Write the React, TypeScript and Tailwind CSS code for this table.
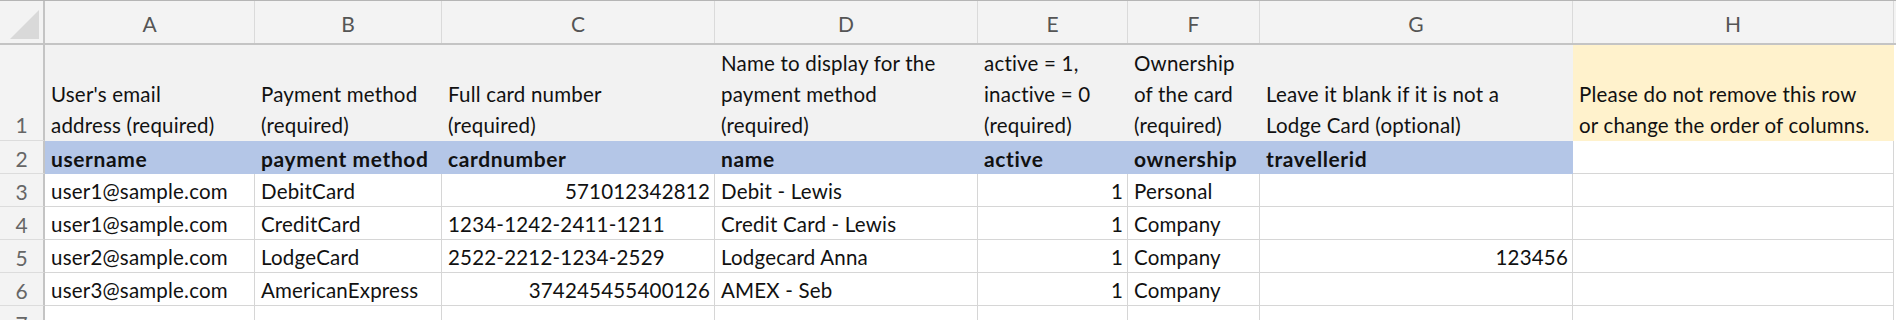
import React from "react";

type Fill = "none" | "gray" | "blue" | "yellow";

const colW = [
  "w-[210px]",
  "w-[187px]",
  "w-[273px]",
  "w-[263px]",
  "w-[150px]",
  "w-[132px]",
  "w-[313px]",
  "w-[321px]",
];

const letters = ["A", "B", "C", "D", "E", "F", "G", "H"];

const fillCls: Record<Fill, string> = {
  none: "bg-white border-[#d6d6d6]",
  gray: "bg-[#f2f2f2] border-[#f2f2f2]",
  blue: "bg-[#b4c6e7] border-[#b4c6e7]",
  yellow: "bg-[#fff2cc] border-[#fff2cc]",
};

function Cell({
  i,
  fill = "none",
  right = false,
  bold = false,
  lines = [],
  tall = false,
}: {
  i: number;
  fill?: Fill;
  right?: boolean;
  bold?: boolean;
  lines?: string[];
  tall?: boolean;
}) {
  return (
    <div
      className={`${colW[i]} shrink-0 h-full flex flex-col justify-end border-r ${
        tall ? "" : "border-b"
      } ${fillCls[fill]} ${right ? "items-end pr-[4px]" : "items-start pl-[6px]"} ${
        bold ? "font-bold text-[21px] tracking-[0.6px]" : "tracking-[0.2px]"
      } ${tall ? "leading-[31px]" : "leading-[29px]"} whitespace-nowrap text-[#111111]`}
    >
      {lines.map((l, k) => (
        <div key={k}>{l}</div>
      ))}
    </div>
  );
}

function RowNum({ n, tall = false }: { n: number; tall?: boolean }) {
  return (
    <div
      className={`w-[45px] shrink-0 h-full bg-[#f3f3f3] border-r-2 border-r-[#c4c4c4] border-b border-b-[#dcdcdc] flex flex-col justify-end text-center text-[#666666] text-[21px] ${
        tall ? "leading-[31px]" : "leading-[29px]"
      }`}
    >
      <div>{n}</div>
    </div>
  );
}

const dataRows: { v: string; right?: boolean }[][] = [
  [
    { v: "user1@sample.com" },
    { v: "DebitCard" },
    { v: "571012342812", right: true },
    { v: "Debit - Lewis" },
    { v: "1", right: true },
    { v: "Personal" },
    { v: "" },
    { v: "" },
  ],
  [
    { v: "user1@sample.com" },
    { v: "CreditCard" },
    { v: "1234-1242-2411-1211" },
    { v: "Credit Card - Lewis" },
    { v: "1", right: true },
    { v: "Company" },
    { v: "" },
    { v: "" },
  ],
  [
    { v: "user2@sample.com" },
    { v: "LodgeCard" },
    { v: "2522-2212-1234-2529" },
    { v: "Lodgecard Anna" },
    { v: "1", right: true },
    { v: "Company" },
    { v: "123456", right: true },
    { v: "" },
  ],
  [
    { v: "user3@sample.com" },
    { v: "AmericanExpress" },
    { v: "374245455400126", right: true },
    { v: "AMEX - Seb" },
    { v: "1", right: true },
    { v: "Company" },
    { v: "" },
    { v: "" },
  ],
];

const row1: string[][] = [
  ["User's email", "address (required)"],
  ["Payment method", "(required)"],
  ["Full card number", "(required)"],
  ["Name to display for the", "payment method", "(required)"],
  ["active = 1,", "inactive = 0", "(required)"],
  ["Ownership", "of the card", "(required)"],
  ["Leave it blank if it is not a", "Lodge Card (optional)"],
  ["Please do not remove this row", "or change the order of columns."],
];

const row2 = [
  "username",
  "payment method",
  "cardnumber",
  "name",
  "active",
  "ownership",
  "travellerid",
  "",
];

export default function App() {
  return (
    <div className="w-[1896px] h-[320px] overflow-hidden bg-white font-['Lato',sans-serif] text-[20.5px] border-t border-[#b5b5b5]">
      {/* column header */}
      <div className="flex h-[44px] border-b-2 border-[#c4c4c4] bg-[#f3f3f3]">
        <div className="w-[45px] shrink-0 h-full border-r-2 border-[#c4c4c4] relative">
          <svg
            className="absolute left-0 top-0"
            width="43"
            height="42"
            viewBox="0 0 43 42"
          >
            <polygon points="39,9 39,38 10,38" fill="#d9d9d9" />
          </svg>
        </div>
        {letters.map((l, i) => (
          <div
            key={l}
            className={`${colW[i]} shrink-0 h-full border-r border-[#dadada] text-center text-[#555555] text-[21px] pt-[11px] leading-[24px]`}
          >
            {l}
          </div>
        ))}
        <div className="flex-1" />
      </div>

      {/* row 1 */}
      <div className="flex h-[96px]">
        <RowNum n={1} tall />
        {row1.map((lines, i) => (
          <Cell key={i} i={i} fill={i === 7 ? "yellow" : "gray"} lines={lines} tall />
        ))}
        <div className="flex-1" />
      </div>

      {/* row 2 */}
      <div className="flex h-[33px]">
        <RowNum n={2} />
        {row2.map((v, i) => (
          <Cell key={i} i={i} fill={i === 7 ? "none" : "blue"} bold lines={v ? [v] : []} />
        ))}
        <div className="flex-1" />
      </div>

      {dataRows.map((r, ri) => (
        <div key={ri} className="flex h-[33px]">
          <RowNum n={ri + 3} />
          {r.map((c, i) => (
            <Cell key={i} i={i} right={c.right} lines={c.v ? [c.v] : []} />
          ))}
          <div className="flex-1" />
        </div>
      ))}

      {/* row 7 (partial) */}
      <div className="flex h-[33px]">
        <RowNum n={7} />
        {letters.map((_, i) => (
          <Cell key={i} i={i} />
        ))}
        <div className="flex-1" />
      </div>
    </div>
  );
}
